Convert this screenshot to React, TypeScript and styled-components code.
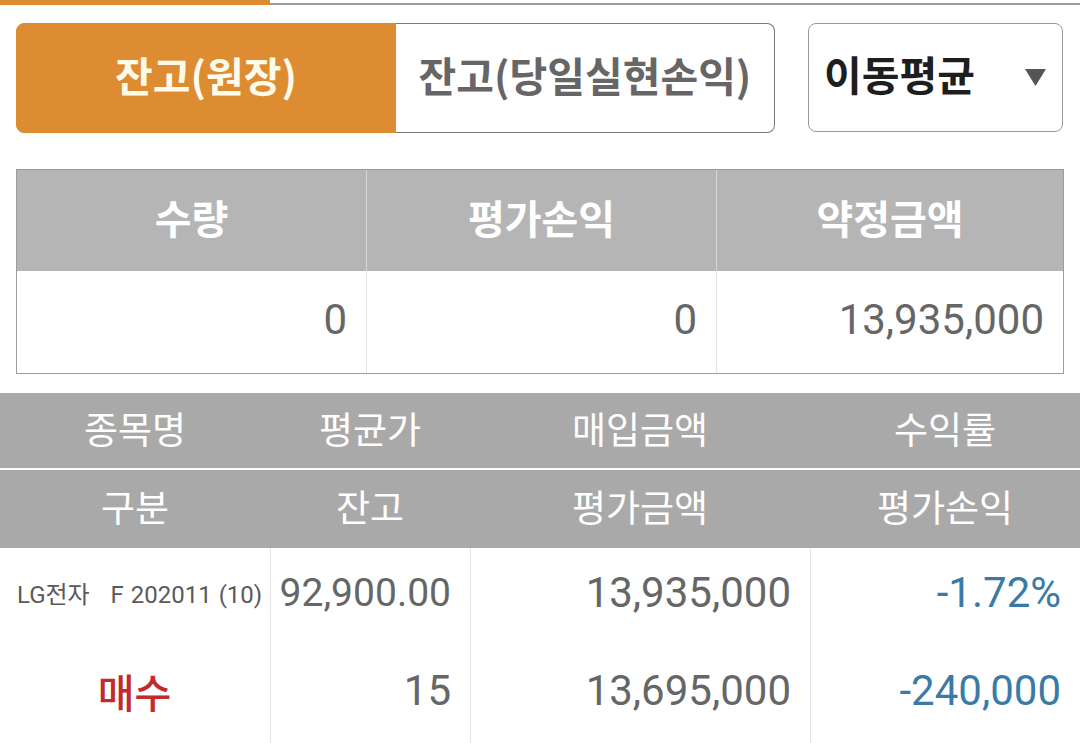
import React from 'react'
import styled, { createGlobalStyle } from 'styled-components'

const GlobalStyle = createGlobalStyle`
  html, body {
    margin: 0;
    padding: 0;
    background: #fff;
  }
  body {
    font-family: Roboto, 'Noto Sans CJK KR', sans-serif;
    width: 1080px;
    overflow: hidden;
  }
`

const KR = `'Noto Sans CJK KR', 'Noto Sans', sans-serif`
const NUM = `Roboto, 'Noto Sans CJK KR', sans-serif`

const Page = styled.div`
  width: 1080px;
  height: 743px;
  overflow: hidden;
  background: #fff;
`

const TopBar = styled.div`
  display: flex;
  align-items: flex-end;
  height: 5px;
`

const TopActive = styled.div`
  width: 270px;
  height: 5px;
  background: #de8c31;
`

const TopRest = styled.div`
  flex: 1;
  height: 2px;
  background: #9a9a9a;
`

const Controls = styled.div`
  display: flex;
  gap: 33px;
  padding: 18px 17px 0 16px;
  height: 110px;
`

const TabGroup = styled.div`
  display: flex;
  width: 759px;
`

interface TabProps {
  active?: boolean
}

const Tab = styled.button<TabProps>`
  flex: 1;
  display: flex;
  align-items: center;
  justify-content: center;
  margin: 0;
  padding: 0 0 9px;
  font-family: ${KR};
  font-size: 41px;
  font-weight: 700;
  background: ${({ active }) => (active ? '#de8c31' : '#fff')};
  color: ${({ active }) => (active ? '#fffbea' : '#666')};
  border: ${({ active }) => (active ? '1px solid #de8c31' : '1px solid #7a7a7a')};
  border-left: ${({ active }) => (active ? '1px solid #de8c31' : 'none')};
  border-radius: ${({ active }) => (active ? '8px 0 0 8px' : '0 8px 8px 0')};
`

const Select = styled.div`
  width: 255px;
  box-sizing: border-box;
  border: 1px solid #9a9a9a;
  border-radius: 8px;
  display: flex;
  align-items: center;
  justify-content: space-between;
  padding: 0 16px 9px 15px;
  font-family: ${KR};
  font-size: 41px;
  font-weight: 700;
  color: #1e1e1e;
  height: 109px;
`

const Caret = styled.svg`
  width: 21px;
  height: 17px;
  margin-top: 9px;
`

const Summary = styled.div`
  margin: 36px 16px 0;
  border: 1px solid #9c9c9c;
  display: grid;
  grid-template-columns: 349px 350px 1fr;
  grid-template-rows: 101px 102px;
`

const SumHead = styled.div`
  background: #b5b5b5;
  color: #fff;
  font-family: ${KR};
  font-weight: 700;
  font-size: 40px;
  display: flex;
  align-items: center;
  justify-content: center;
  padding-bottom: 8px;
  & + & {
    border-left: 1px solid #d8d8d8;
  }
`

const SumCell = styled.div`
  display: flex;
  align-items: center;
  justify-content: flex-end;
  padding: 0 19px 5px 0;
  font-family: ${NUM};
  font-size: 42px;
  color: #666;
  & + & {
    border-left: 1px solid #e4e4e4;
  }
`

const List = styled.div`
  margin-top: 19px;
`

const ListHeadRow = styled.div<{ h: number }>`
  display: grid;
  grid-template-columns: 270px 200px 340px 1fr;
  height: ${({ h }) => h}px;
  background: #a9a9a9;
  & + & {
    border-top: 2px solid #fff;
  }
`

const HeadLabel = styled.div`
  display: flex;
  align-items: center;
  justify-content: center;
  font-family: ${KR};
  font-size: 37px;
  color: #fff;
  padding-bottom: 6px;
`

const DataGrid = styled.div`
  display: grid;
  grid-template-columns: 270px 200px 340px 1fr;
  grid-template-rows: 93px 103px;
`

interface CellProps {
  align?: 'left' | 'center' | 'right'
  first?: boolean
  size?: number
}

const DataCell = styled.div<CellProps>`
  display: flex;
  align-items: center;
  justify-content: ${({ align }) =>
    align === 'left' ? 'flex-start' : align === 'center' ? 'center' : 'flex-end'};
  padding: 0 19px 4px 18px;
  border-left: ${({ first }) => (first ? 'none' : '1px solid #e4e4e4')};
  font-family: ${NUM};
  font-size: ${({ size }) => size || 42}px;
  color: #666;
  white-space: nowrap;
`

const Name = styled.span`
  font-family: ${NUM};
  font-size: 24px;
  color: #5a5a5a;
  margin-left: -1px;
  word-spacing: 1px;
`

const Side = styled.span`
  font-family: ${KR};
  font-size: 40px;
  font-weight: 500;
  color: #c22a2c;
`

const Blue = styled.span`
  color: #3a7ba6;
`

export default function App() {
  return (
    <Page>
      <GlobalStyle />
      <TopBar>
        <TopActive />
        <TopRest />
      </TopBar>

      <Controls>
        <TabGroup>
          <Tab active>잔고(원장)</Tab>
          <Tab>잔고(당일실현손익)</Tab>
        </TabGroup>
        <Select>
          <span>이동평균</span>
          <Caret viewBox="0 0 21 17">
            <polygon points="0,0 21,0 10.5,17" fill="#555" />
          </Caret>
        </Select>
      </Controls>

      <Summary>
        <SumHead>수량</SumHead>
        <SumHead>평가손익</SumHead>
        <SumHead>약정금액</SumHead>
        <SumCell>0</SumCell>
        <SumCell>0</SumCell>
        <SumCell>13,935,000</SumCell>
      </Summary>

      <List>
        <ListHeadRow h={75}>
          <HeadLabel>종목명</HeadLabel>
          <HeadLabel>평균가</HeadLabel>
          <HeadLabel>매입금액</HeadLabel>
          <HeadLabel>수익률</HeadLabel>
        </ListHeadRow>
        <ListHeadRow h={78}>
          <HeadLabel>구분</HeadLabel>
          <HeadLabel>잔고</HeadLabel>
          <HeadLabel>평가금액</HeadLabel>
          <HeadLabel>평가손익</HeadLabel>
        </ListHeadRow>

        <DataGrid>
          <DataCell first align="left">
            <Name>LG전자&nbsp;&nbsp;&nbsp;F 202011 (10)</Name>
          </DataCell>
          <DataCell size={39}>92,900.00</DataCell>
          <DataCell>13,935,000</DataCell>
          <DataCell>
            <Blue>-1.72%</Blue>
          </DataCell>
          <DataCell first align="center">
            <Side>매수</Side>
          </DataCell>
          <DataCell>15</DataCell>
          <DataCell>13,695,000</DataCell>
          <DataCell>
            <Blue>-240,000</Blue>
          </DataCell>
        </DataGrid>
      </List>
    </Page>
  )
}
